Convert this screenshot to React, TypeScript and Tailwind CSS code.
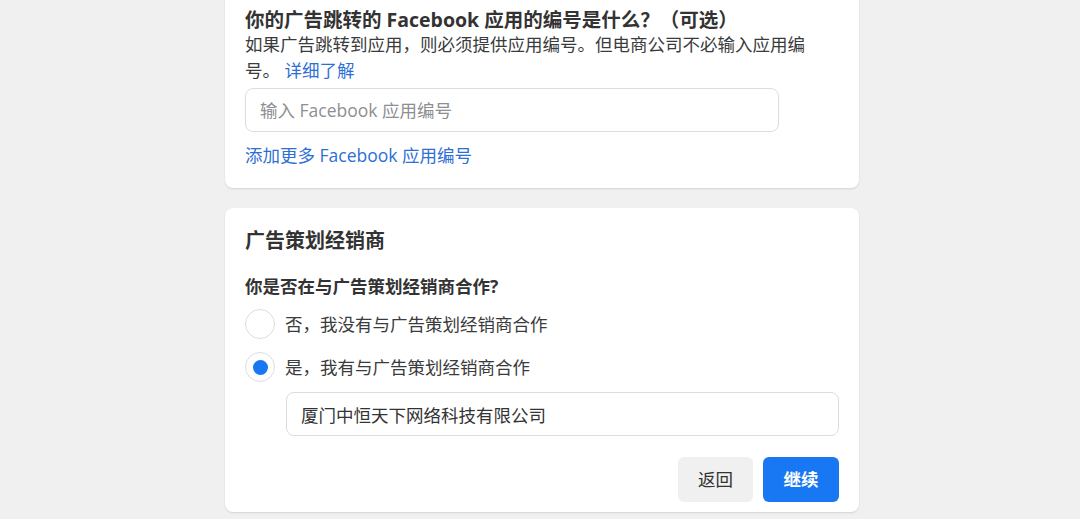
import { useState } from "react";

const font = "font-['Open_Sans','Noto_Sans_CJK_SC',sans-serif]";

function Radio({ checked, label, onClick }: { checked: boolean; label: string; onClick: () => void }) {
  return (
    <button type="button" onClick={onClick} className="flex items-center gap-[10px] text-left">
      <span className="size-[30px] rounded-full border border-[#dcdde0] bg-white flex items-center justify-center">
        {checked && <span className="size-[15px] rounded-full bg-[#1877f2]" />}
      </span>
      <span className="text-[17.5px] leading-[24px] text-[#3a3b3c]">{label}</span>
    </button>
  );
}

export default function App() {
  const [agency, setAgency] = useState<"no" | "yes">("yes");

  return (
    <main className={`min-h-[519px] bg-[#f0f0f0] pl-1 pb-4 ${font}`}>

      <div className="mx-auto w-[634px] flex flex-col gap-5">

        {/* app id */}
        <section className="bg-white rounded-b-lg shadow-[0_1px_2px_rgba(0,0,0,0.12)] px-5 pt-2 pb-[21px]">
          <h2 className="text-[19.5px] leading-[23px] font-bold text-[#333]">
            你的广告跳转的 Facebook 应用的编号是什么？（可选）
          </h2>
          <p className="w-[570px] text-[17.5px] leading-[26px] text-[#3a3b3c]">
            如果广告跳转到应用，则必须提供应用编号。但电商公司不必输入应用编号。 <a href="#" className="text-[#2e6fd5]">详细了解</a>
          </p>
          <input
            placeholder="输入 Facebook 应用编号"
            className="mt-[5px] w-[534px] h-[44px] rounded-lg border border-[#dcdde0] px-[14px] text-[17.5px] text-[#333] placeholder:text-[#8d8f92] outline-none"
          />
          <a href="#" className="block mt-[11px] text-[17.5px] leading-[24px] text-[#2e6fd5]">
            添加更多 Facebook 应用编号
          </a>
        </section>

        {/* agency */}
        <section className="bg-white rounded-lg shadow-[0_1px_2px_rgba(0,0,0,0.12)] px-5 pt-5 pb-[10px]">
          <h2 className="text-[20px] leading-[26px] font-bold text-[#333]">广告策划经销商</h2>
          <h3 className="mt-5 text-[17.5px] leading-[24px] font-bold text-[#333]">你是否在与广告策划经销商合作?</h3>

          <div className="mt-[11px] flex flex-col gap-[13px]">
            <Radio checked={agency === "no"} label="否，我没有与广告策划经销商合作" onClick={() => setAgency("no")} />
            <Radio checked={agency === "yes"} label="是，我有与广告策划经销商合作" onClick={() => setAgency("yes")} />
          </div>

          <div className="pl-[41px] mt-[10px]">
            <input
              defaultValue="厦门中恒天下网络科技有限公司"
              className="w-full h-[44px] rounded-lg border border-[#dcdde0] px-[14px] text-[17.5px] text-[#333] outline-none"
            />
          </div>

          <div className="mt-[21px] flex justify-end gap-[10px]">
            <button className="w-[75px] h-[45px] rounded-md bg-[#f0f0f0] text-[17.5px] text-[#333]">返回</button>
            <button className="w-[76px] h-[45px] rounded-md bg-[#1877f2] text-[17.5px] font-bold text-white">继续</button>
          </div>
        </section>

      </div>
    </main>
  );
}
